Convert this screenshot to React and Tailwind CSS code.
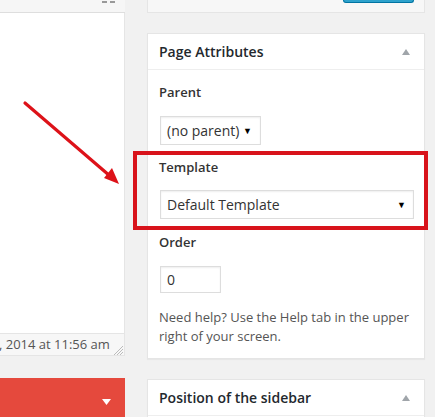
import React from "react";

function Caret() {
  return <span className="text-[9px] leading-none text-black">▼</span>;
}

function UpTri() {
  return (
    <svg width="8" height="6" viewBox="0 0 8 6" className="block">
      <polygon points="4,0 8,6 0,6" fill="#a0a5aa" />
    </svg>
  );
}

export default function App() {
  return (
    <div
      className="relative w-[435px] h-[417px] overflow-hidden bg-[#f1f1f1] flex items-start"
      style={{ fontFamily: '"Open Sans", "Noto Sans", sans-serif' }}
    >
      {/* Left column */}
      <div className="w-[125px] h-[417px] flex flex-col shrink-0">
        <div className="shrink-0 h-[13px] bg-[#f6f6f6] border-b border-[#dedede] flex justify-end items-start pr-[10px]">
          <div className="mt-[1px] flex gap-[3px]">
            <div className="w-[5px] h-[2px] bg-[#999]" />
            <div className="w-[5px] h-[2px] bg-[#999]" />
          </div>
        </div>
        <div className="shrink-0 h-[320px] bg-white border-r border-[#e5e5e5]" />
        <div className="shrink-0 h-[23px] bg-[#f7f7f7] border-t border-b border-[#e5e5e5] border-r flex items-center justify-between">
          <span className="text-[13px] text-[#555] leading-none whitespace-nowrap -ml-[1px]">
            , 2014 at 11:56 am
          </span>
          <svg width="10" height="10" viewBox="0 0 10 10" className="mr-[1px] mt-[10px]">
            <line x1="10" y1="1" x2="1" y2="10" stroke="#bbb" strokeWidth="1" />
            <line x1="10" y1="4" x2="4" y2="10" stroke="#bbb" strokeWidth="1" />
            <line x1="10" y1="7" x2="7" y2="10" stroke="#bbb" strokeWidth="1" />
          </svg>
        </div>
        <div className="shrink-0 h-[22px]" />
        <div className="flex-1 bg-[#e5493d] flex justify-end items-start pr-[14px] pt-[21px]">
          <svg width="9" height="6" viewBox="0 0 9 6">
            <polygon points="0,0 9,0 4.5,6" fill="#fff" />
          </svg>
        </div>
      </div>

      {/* Right column */}
      <div className="ml-[22px] w-[278px] flex flex-col shrink-0">
        <div className="shrink-0 h-[13px] bg-[#f7f7f7] border border-t-0 border-[#e5e5e5] flex justify-end pr-[10px]">
          <div className="w-[71px] h-[3px] bg-[#2ea2cc] border border-t-0 border-[#0074a2] rounded-b-[3px]" />
        </div>

        <div className="shrink-0 mt-[20px] bg-white border border-[#e5e5e5] shadow-[0_1px_1px_rgba(0,0,0,0.04)]">
          <div className="h-[36px] border-b border-[#eee] flex items-center justify-between pl-[11px] pr-[14px]">
            <span className="text-[14px] font-semibold text-[#23282d] leading-none">Page Attributes</span>
            <UpTri />
          </div>
          <div className="px-[12px] pt-[12px] pb-[12px]">
            <div className="text-[13px] font-semibold text-[#333] leading-[20px] -ml-[1px]">Parent</div>
            <div className="mt-[14px] w-[101px] h-[29px] border border-[#ddd] bg-white flex items-center justify-between pl-[6px] pr-[8px] shadow-[inset_0_1px_2px_rgba(0,0,0,0.07)]">
              <span className="text-[14px] text-[#333] leading-none">(no parent)</span>
              <Caret />
            </div>
            <div className="mt-[12px] text-[13px] font-semibold text-[#333] leading-[20px] -ml-[1px]">Template</div>
            <div className="mt-[13px] w-[254px] h-[29px] border border-[#ddd] bg-white flex items-center justify-between pl-[6px] pr-[7px] shadow-[inset_0_1px_2px_rgba(0,0,0,0.07)]">
              <span className="text-[14px] text-[#333] leading-none">Default Template</span>
              <Caret />
            </div>
            <div className="mt-[13px] text-[13px] font-semibold text-[#333] leading-[20px] -ml-[1px]">Order</div>
            <div className="mt-[14px] w-[61px] h-[27px] border border-[#ddd] bg-white flex items-center pl-[6px] shadow-[inset_0_1px_2px_rgba(0,0,0,0.07)]">
              <span className="text-[14px] text-[#333] leading-none">0</span>
            </div>
            <p className="mt-[15px] text-[13px] text-[#555] leading-[19px] -ml-[1px]">
              Need help? Use the Help tab in the upper right of your screen.
            </p>
          </div>
        </div>

        <div className="shrink-0 mt-[20px] bg-white border border-[#e5e5e5] shadow-[0_1px_1px_rgba(0,0,0,0.04)]">
          <div className="h-[36px] border-b border-[#eee] flex items-center justify-between pl-[11px] pr-[14px]">
            <span className="text-[14px] font-semibold text-[#23282d] leading-none">Position of the sidebar</span>
            <UpTri />
          </div>
          <div className="h-[40px]" />
        </div>
      </div>

      {/* Annotation: red highlight box */}
      <div className="absolute left-[133px] top-[151px] w-[295px] h-[79px] border-[4px] border-[#d8131b]" />

      {/* Annotation: red arrow */}
      <svg className="absolute left-0 top-0" width="435" height="417" viewBox="0 0 435 417">
        <line x1="25" y1="103" x2="110" y2="176" stroke="#dd1219" strokeWidth="3.2" strokeLinecap="round" />
        <polygon points="119,184 104,178 112,168" fill="#dd1219" />
      </svg>
    </div>
  );
}
